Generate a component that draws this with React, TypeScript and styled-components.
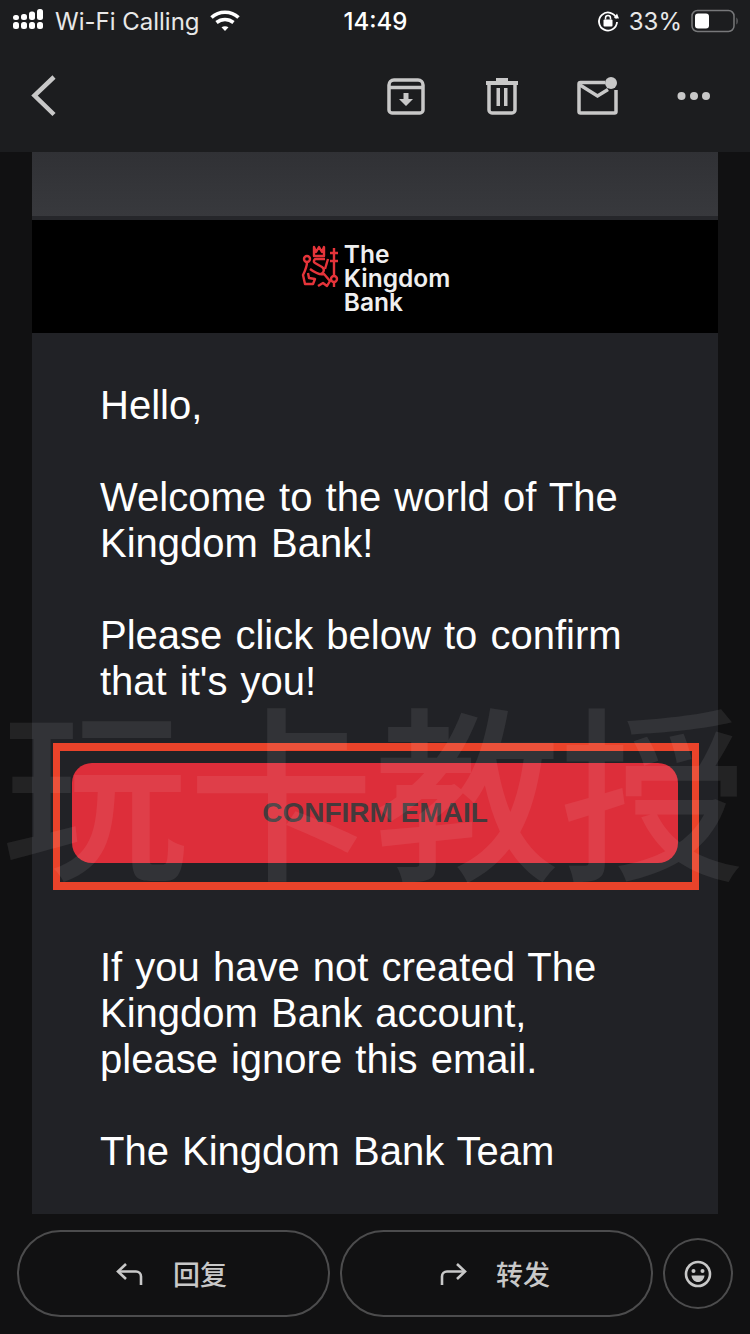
import React from 'react'
import styled, { createGlobalStyle } from 'styled-components'

const GlobalStyle = createGlobalStyle`
    html, body {
        margin: 0;
        padding: 0;
        background: #111112;
    }
    * {
        box-sizing: border-box;
    }
`

const App = () => {
    return (
        <Page>
            <GlobalStyle />
            <Header>
                <StatusBar>
                    <StatusLeft>
                        <SignalDots />
                        <span>Wi-Fi Calling</span>
                        <WifiIcon />
                    </StatusLeft>
                    <Clock>14:49</Clock>
                    <StatusRight>
                        <LockIcon />
                        <span>33%</span>
                        <BatteryIcon />
                    </StatusRight>
                </StatusBar>
                <Toolbar>
                    <BackIcon />
                    <ToolIcons>
                        <ToolSlot><ArchiveIcon /></ToolSlot>
                        <ToolSlot><TrashIcon /></ToolSlot>
                        <ToolSlot><UnreadIcon /></ToolSlot>
                        <ToolSlot><MoreIcon /></ToolSlot>
                    </ToolIcons>
                </Toolbar>
            </Header>

            <Mail>
                <TopBand />
                <LogoBar>
                    <CrestSlot><CrestIcon /></CrestSlot>
                    <LogoText>The<br />Kingdom<br />Bank</LogoText>
                </LogoBar>
                <MailBody>
                    <Paragraph>Hello,</Paragraph>
                    <Paragraph>Welcome to the world of The<br />Kingdom Bank!</Paragraph>
                    <Paragraph>Please click below to confirm<br />that it's you!</Paragraph>
                    <Highlight>
                        <ConfirmButton>CONFIRM EMAIL</ConfirmButton>
                    </Highlight>
                    <Paragraph>If you have not created The<br />Kingdom Bank account,<br />please ignore this email.</Paragraph>
                    <Paragraph>The Kingdom Bank Team</Paragraph>
                </MailBody>
            </Mail>

            <BottomBar>
                <PillButton>
                    <ReplyIcon />
                    <PillLabel>回复</PillLabel>
                </PillButton>
                <PillButton>
                    <ForwardIcon />
                    <PillLabel>转发</PillLabel>
                </PillButton>
                <EmojiButton><SmileIcon /></EmojiButton>
            </BottomBar>

            <Watermark>玩卡教授</Watermark>
        </Page>
    )
}

/* ICONS */

const SignalDots = () => (
    <svg width="34" height="24" viewBox="0 0 34 24" fill="#fff">
        <rect x="1" y="13" width="6" height="7" rx="2.5" />
        <rect x="9" y="13" width="6" height="7" rx="2.5" />
        <rect x="17" y="13" width="6" height="7" rx="2.5" />
        <rect x="25" y="13" width="6" height="7" rx="2.5" />
        <rect x="1" y="6" width="6" height="5" rx="2.5" />
        <rect x="9" y="5" width="6" height="6" rx="2.5" />
        <rect x="17" y="2.5" width="6" height="8.5" rx="2.5" />
        <rect x="25" y="0" width="6" height="11" rx="2.5" />
    </svg>
)

const WifiIcon = () => (
    <svg width="32" height="24" viewBox="0 0 32 24" fill="none" stroke="#fff" strokeWidth="3.6">
        <path d="M2.5 8.5C10 1.5 22 1.5 29.5 8.5" />
        <path d="M7.5 13.5C12.500 9.500 19.500 9.500 24.500 13.500" />
        <path d="M12.500 18.300C14.500 16.800 17.500 16.800 19.500 18.300L16 22Z" fill="#fff" stroke="none" />
    </svg>
)

const LockIcon = () => (
    <svg width="24" height="24" viewBox="0 0 24 24" fill="none">
        <path d="M20.500 9.500A9 9 0 1 0 21 13" stroke="#fff" strokeWidth="1.800" />
        <path d="M18 9l5 0.500-2 -5z" fill="#fff" />
        <rect x="7.500" y="10.500" width="9" height="7" rx="1" fill="#fff" />
        <path d="M9.500 10.500V9a2.500 2.500 0 0 1 5 0v1.500" stroke="#fff" strokeWidth="1.500" />
    </svg>
)

const BatteryIcon = () => (
    <svg width="48" height="24" viewBox="0 0 48 24" fill="none">
        <rect x="1" y="1.500" width="42" height="21" rx="5.500" stroke="#77787a" strokeWidth="1.500" />
        <rect x="4" y="4.500" width="14" height="15" rx="3" fill="#fff" />
        <path d="M45.500 8.500c1.500 1 1.500 6 0 7z" fill="#77787a" />
    </svg>
)

const BackIcon = () => (
    <svg width="28" height="42" viewBox="0 0 28 42" fill="none" stroke="#c8c8c8" strokeWidth="4.500">
        <path d="M24 2L4.500 20.500L24 39.500" />
    </svg>
)

const ArchiveIcon = () => (
    <svg width="38" height="38" viewBox="0 0 38 38" fill="none">
        <path d="M2 8a5 5 0 0 1 5-5h24a5 5 0 0 1 5 5v25a3 3 0 0 1-3 3H5a3 3 0 0 1-3-3zM2 10.500h34" stroke="#c8c8c8" strokeWidth="3.500" />
        <path d="M16.500 16h5v6h4.500L19 29l-7-7h4.500z" fill="#c8c8c8" />
    </svg>
)

const TrashIcon = () => (
    <svg width="34" height="38" viewBox="0 0 34 38" fill="none">
        <path d="M1 4h10V1h12v3h10v4H1z" fill="#c8c8c8" />
        <path d="M4 7v26a3 3 0 0 0 3 3h20a3 3 0 0 0 3-3V7" stroke="#c8c8c8" strokeWidth="3.500" />
        <rect x="11.500" y="11" width="3.500" height="18" fill="#c8c8c8" />
        <rect x="19" y="11" width="3.500" height="18" fill="#c8c8c8" />
    </svg>
)

const UnreadIcon = () => (
    <svg width="42" height="38" viewBox="0 0 42 38" fill="none">
        <path d="M28 5.500H3.500a1.500 1.500 0 0 0-1.500 1.500v27.500a1.500 1.500 0 0 0 1.500 1.500h34a1.500 1.500 0 0 0 1.500-1.500V13" stroke="#c8c8c8" strokeWidth="3.500" />
        <path d="M3 8l17.500 11L31 12.500" stroke="#c8c8c8" strokeWidth="3.500" />
        <circle cx="34" cy="6" r="6" fill="#c8c8c8" />
    </svg>
)

const MoreIcon = () => (
    <svg width="34" height="10" viewBox="0 0 34 10" fill="#c8c8c8">
        <circle cx="4.500" cy="5" r="4" />
        <circle cx="17" cy="5" r="4" />
        <circle cx="29" cy="5" r="4" />
    </svg>
)

const CrestIcon = () => (
    <svg width="40" height="44" viewBox="0 0 40 44" fill="none" stroke="#e5343a" strokeWidth="2.400" strokeLinejoin="round">
        <path d="M14 2l2 5 3-5 3 5 2-5v9H14z" />
        <path d="M25 14h-9c-2 0-3 3-1 4l7 4c3 2 2 6-1 7" />
        <circle cx="7" cy="14" r="3" />
        <path d="M7 17c0 4-1 7-4 13l2 9h8l2-5-6-1-1-5" />
        <path d="M10 24c4 3 10 6 14 5l6 7-3 5-4-3-5 3" />
        <path d="M28 14l-3 10" />
        <path d="M34 3v28M30 8h8M30 16h8" />
        <circle cx="34" cy="34" r="3" />
        <path d="M34 37v5" />
    </svg>
)

const ReplyIcon = () => (
    <svg width="28" height="24" viewBox="0 0 28 24" fill="none" stroke="#c8c8c8" strokeWidth="2.600">
        <path d="M10 2L2 9.500L10 17" />
        <path d="M2 9.500H20a5 5 0 0 1 5 5V23" />
    </svg>
)

const ForwardIcon = () => (
    <svg width="28" height="24" viewBox="0 0 28 24" fill="none" stroke="#c8c8c8" strokeWidth="2.600">
        <path d="M18 2L26 9.500L18 17" />
        <path d="M26 9.500H8a5 5 0 0 0-5 5V23" />
    </svg>
)

const SmileIcon = () => (
    <svg width="28" height="28" viewBox="0 0 28 28" fill="none">
        <circle cx="14" cy="14" r="12" stroke="#c8c8c8" strokeWidth="2.600" />
        <circle cx="9.500" cy="11" r="2" fill="#c8c8c8" />
        <circle cx="18.500" cy="11" r="2" fill="#c8c8c8" />
        <path d="M7.500 15.500h13c-0.500 4-3 6.500-6.500 6.500s-6-2.500-6.500-6.500z" fill="#c8c8c8" />
    </svg>
)

/* HEADER */

const Page = styled.div`
    position: relative;
    display: flex;
    flex-direction: column;
    width: 750px;
    height: 1334px;
    overflow: hidden;
    background: #111112;
    font-family: "Liberation Sans", Arial, sans-serif;
`

const Header = styled.header`
    flex: 0 0 152px;
    display: flex;
    flex-direction: column;
    background: #1c1d1f;
`

const StatusBar = styled.div`
    display: grid;
    grid-template-columns: 1fr auto 1fr;
    align-items: center;
    height: 42px;
    padding: 0 11px 0 12px;
    color: #e8e8e8;
    font-family: Inter, "Liberation Sans", sans-serif;
    font-size: 24px;
`

const StatusLeft = styled.div`
    display: flex;
    align-items: center;
    gap: 9px;
`

const StatusRight = styled.div`
    display: flex;
    align-items: center;
    justify-content: flex-end;
    gap: 9px;
`

const Clock = styled.div`
    font-weight: 500;
    color: #fff;
`

const Toolbar = styled.div`
    flex: 1;
    display: flex;
    align-items: center;
    justify-content: space-between;
    padding: 0 8px 2px 30px;
`

const ToolIcons = styled.div`
    display: flex;
    align-items: center;
`

const ToolSlot = styled.div`
    display: flex;
    align-items: center;
    justify-content: center;
    width: 96px;
    height: 44px;
`

/* MAIL */

const Mail = styled.main`
    flex: 0 0 1062px;
    display: flex;
    flex-direction: column;
    width: 686px;
    margin-left: 32px;
`

const TopBand = styled.div`
    flex: 0 0 68px;
    background: linear-gradient(#303135, #38393d);
    border-bottom: 4px solid #26272b;
`

const LogoBar = styled.div`
    flex: 0 0 113px;
    display: flex;
    align-items: center;
    justify-content: center;
    gap: 4px;
    padding-top: 3px;
    background: #000;
`

const CrestSlot = styled.div`
    display: flex;
    align-self: flex-start;
    margin-top: 22px;
`

const LogoText = styled.div`
    color: #efefef;
    font-family: Inter, "Liberation Sans", sans-serif;
    font-size: 24.5px;
    font-weight: 600;
    line-height: 24px;
`

const MailBody = styled.div`
    flex: 1;
    display: flex;
    flex-direction: column;
    padding: 49px 20px 0;
    background: #212226;
`

const Paragraph = styled.p`
    margin: 0 0 46px;
    padding: 0 48px;
    color: #fff;
    font-family: "Liberation Sans", Arial, sans-serif;
    font-size: 40px;
    line-height: 46px;
    word-spacing: 2px;

    &:last-child {
        margin-bottom: 0;
    }
`

const Highlight = styled.div`
    flex: 0 0 147px;
    display: flex;
    width: 646px;
    margin: -7px 0 54px 1px;
    padding: 12px 14px 19px 12px;
    border-style: solid;
    border-color: #ea432a;
    border-width: 8px 7px;
`

const ConfirmButton = styled.div`
    flex: 1;
    display: flex;
    align-items: center;
    justify-content: center;
    border-radius: 20px;
    background: #dd2e3a;
    color: #453a3c;
    font-family: "Liberation Sans", Arial, sans-serif;
    font-size: 28px;
    font-weight: 700;
`

/* BOTTOM */

const BottomBar = styled.footer`
    flex: 1;
    display: flex;
    align-items: center;
    gap: 10px;
    padding: 0 17px 1px;
`

const PillButton = styled.div`
    flex: 0 0 313px;
    display: flex;
    align-items: center;
    justify-content: center;
    gap: 29px;
    height: 87px;
    padding-right: 4px;
    border: 2px solid #4c4c4d;
    border-radius: 44px;
`

const PillLabel = styled.span`
    color: #c8c8c8;
    font-family: "Noto Sans CJK SC", sans-serif;
    font-size: 27px;
    font-weight: 500;
    line-height: 1;
`

const EmojiButton = styled.div`
    flex: 0 0 70px;
    display: flex;
    align-items: center;
    justify-content: center;
    height: 71px;
    border: 2px solid #4c4c4d;
    border-radius: 50%;
`

const Watermark = styled.div`
    position: absolute;
    top: 675px;
    left: 2px;
    width: 750px;
    color: rgba(255, 255, 255, 0.08);
    font-family: "Noto Sans CJK SC", sans-serif;
    font-size: 186px;
    font-weight: 500;
    line-height: 220px;
    white-space: nowrap;
    pointer-events: none;
`

export default App
